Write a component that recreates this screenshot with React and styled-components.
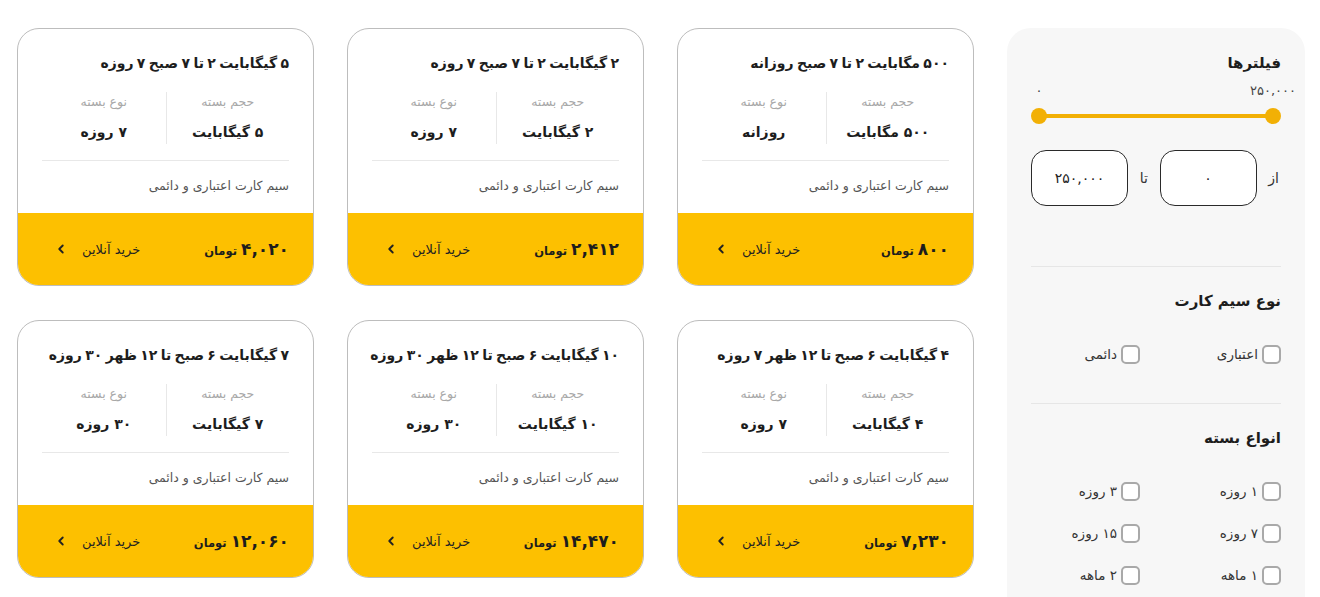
import React from "react"
import styled, { createGlobalStyle } from "styled-components"
import { ChevronLeft } from "lucide-react"

const GlobalStyle = createGlobalStyle`
  html, body {
    margin: 0;
    padding: 0;
    background: #fff;
    overflow: hidden;
  }
  body {
    font-family: "DejaVu Sans", sans-serif;
    color: #1d1d1d;
  }
  * { box-sizing: border-box; }
`

const Page = styled.div`
  direction: rtl;
  display: flex;
  align-items: flex-start;
  gap: 33px;
  padding: 28px 15px 0 18px;
`

const Sidebar = styled.aside`
  width: 298px;
  flex-shrink: 0;
  background: #f7f7f7;
  border-radius: 24px 24px 0 0;
  padding: 0 24px 40px;
`

const Section = styled.div`
  padding: ${(p) => p.$pad || "23px 0 37px"};
  border-bottom: ${(p) => (p.$last ? "none" : "1px solid #e6e6e6")};
`

const Heading = styled.h3`
  margin: 0;
  font-size: 15px;
  font-weight: 700;
  line-height: 22px;
  color: #1d1d1d;
`

const SliderLabels = styled.div`
  display: flex;
  justify-content: space-between;
  margin-top: 8px;
  height: 18px;
`

const ThumbLabel = styled.span`
  width: 16px;
  display: flex;
  justify-content: center;
  white-space: nowrap;
  font-size: 13px;
  line-height: 18px;
  color: #444;
`

const Track = styled.div`
  margin-top: 8px;
  height: 16px;
  display: flex;
  align-items: center;
  justify-content: space-between;
  background: linear-gradient(#f2b005, #f2b005) center / calc(100% - 16px) 4px no-repeat;
`

const Thumb = styled.span`
  width: 16px;
  height: 16px;
  border-radius: 50%;
  background: #f2b005;
`

const RangeRow = styled.div`
  margin-top: 26px;
  display: flex;
  align-items: center;
  justify-content: space-between;
`

const RangeLabel = styled.span`
  font-size: 14px;
  color: #333;
  padding: 0 2px;
`

const RangeInput = styled.div`
  width: 97px;
  height: 56px;
  border: 1px solid #2a2a2a;
  border-radius: 15px;
  background: #fff;
  display: flex;
  align-items: center;
  justify-content: center;
  font-size: 14px;
  color: #222;
`

const CheckGrid = styled.div`
  margin-top: 30px;
  display: grid;
  grid-template-columns: 1fr 1fr;
  column-gap: 32px;
  row-gap: 18px;
`

const CheckItem = styled.label`
  display: flex;
  align-items: center;
  gap: 4px;
  height: 24px;
  font-size: 13.5px;
  color: #333;
`

const Box = styled.span`
  width: 19px;
  height: 19px;
  border: 2px solid #a9a9a9;
  border-radius: 5px;
  background: #fff;
  flex-shrink: 0;
`

const Grid = styled.div`
  display: grid;
  grid-template-columns: repeat(3, 297px);
  gap: 34px 33px;
`

const Card = styled.div`
  height: 258px;
  border: 1px solid #bdbdbd;
  border-radius: 22px;
  overflow: hidden;
  display: flex;
  flex-direction: column;
  background: #fff;
`

const CardBody = styled.div`
  flex: 1;
  padding: 23px 24px 0;
`

const CardTitle = styled.h4`
  margin: 0;
  font-size: 14px;
  font-weight: 700;
  line-height: 22px;
  word-spacing: -1.5px;
  white-space: nowrap;
  color: #1d1d1d;
`

const Specs = styled.div`
  margin-top: 18px;
  padding-bottom: 16px;
  border-bottom: 1px solid #e8e8e8;
  display: grid;
  grid-template-columns: 1fr 1fr;
`

const Spec = styled.div`
  display: flex;
  flex-direction: column;
  align-items: center;
  height: 52px;
  border-left: ${(p) => (p.$divided ? "1px solid #e8e8e8" : "none")};
`

const SpecLabel = styled.span`
  font-size: 12.5px;
  line-height: 20px;
  color: #a8a8a8;
`

const SpecValue = styled.span`
  margin-top: 9px;
  font-size: 14px;
  font-weight: 700;
  line-height: 22px;
  color: #1d1d1d;
`

const Desc = styled.p`
  margin: 15px 0 0;
  font-size: 12.5px;
  line-height: 20px;
  color: #555;
`

const Footer = styled.div`
  height: 72px;
  background: #fdc000;
  display: flex;
  align-items: center;
  justify-content: space-between;
  padding: 0 24px 0 36px;
`

const Price = styled.div`
  display: flex;
  align-items: baseline;
  gap: 4px;
`

const Amount = styled.span`
  font-size: 17px;
  font-weight: 700;
  color: #1d1d1d;
`

const Currency = styled.span`
  font-size: 11.5px;
  font-weight: 700;
  color: #1d1d1d;
`

const BuyButton = styled.button`
  border: none;
  background: none;
  padding: 0;
  display: flex;
  align-items: center;
  gap: 14px;
  font-family: inherit;
  font-size: 13px;
  color: #222;
  cursor: pointer;
`

const packages = [
  { title: "۵۰۰ مگابایت ۲ تا ۷ صبح روزانه", size: "۵۰۰ مگابایت", type: "روزانه", price: "۸۰۰" },
  { title: "۲ گیگابایت ۲ تا ۷ صبح ۷ روزه", size: "۲ گیگابایت", type: "۷ روزه", price: "۲,۴۱۲" },
  { title: "۵ گیگابایت ۲ تا ۷ صبح ۷ روزه", size: "۵ گیگابایت", type: "۷ روزه", price: "۴,۰۲۰" },
  { title: "۴ گیگابایت ۶ صبح تا ۱۲ ظهر ۷ روزه", size: "۴ گیگابایت", type: "۷ روزه", price: "۷,۲۳۰" },
  { title: "۱۰ گیگابایت ۶ صبح تا ۱۲ ظهر ۳۰ روزه", size: "۱۰ گیگابایت", type: "۳۰ روزه", price: "۱۴,۴۷۰" },
  { title: "۷ گیگابایت ۶ صبح تا ۱۲ ظهر ۳۰ روزه", size: "۷ گیگابایت", type: "۳۰ روزه", price: "۱۲,۰۶۰" },
]

const simTypes = ["اعتباری", "دائمی"]
const durations = ["۱ روزه", "۳ روزه", "۷ روزه", "۱۵ روزه", "۱ ماهه", "۲ ماهه"]

const PackageCard = ({ item }) => (
  <Card>
    <CardBody>
      <CardTitle>{item.title}</CardTitle>
      <Specs>
        <Spec $divided>
          <SpecLabel>حجم بسته</SpecLabel>
          <SpecValue>{item.size}</SpecValue>
        </Spec>
        <Spec>
          <SpecLabel>نوع بسته</SpecLabel>
          <SpecValue>{item.type}</SpecValue>
        </Spec>
      </Specs>
      <Desc>سیم کارت اعتباری و دائمی</Desc>
    </CardBody>
    <Footer>
      <Price>
        <Amount>{item.price}</Amount>
        <Currency>تومان</Currency>
      </Price>
      <BuyButton>
        خرید آنلاین
        <ChevronLeft size={14} strokeWidth={3.2} />
      </BuyButton>
    </Footer>
  </Card>
)

export default function App() {
  return (
    <>
      <GlobalStyle />
      <Page>
        <Sidebar>
          <Section $pad="24px 0 60px">
            <Heading>فیلترها</Heading>
            <SliderLabels>
              <ThumbLabel>۲۵۰,۰۰۰</ThumbLabel>
              <ThumbLabel>۰</ThumbLabel>
            </SliderLabels>
            <Track>
              <Thumb />
              <Thumb />
            </Track>
            <RangeRow>
              <RangeLabel>از</RangeLabel>
              <RangeInput>۰</RangeInput>
              <RangeLabel>تا</RangeLabel>
              <RangeInput>۲۵۰,۰۰۰</RangeInput>
            </RangeRow>
          </Section>
          <Section>
            <Heading>نوع سیم کارت</Heading>
            <CheckGrid>
              {simTypes.map((t) => (
                <CheckItem key={t}>
                  <Box />
                  {t}
                </CheckItem>
              ))}
            </CheckGrid>
          </Section>
          <Section $last>
            <Heading>انواع بسته</Heading>
            <CheckGrid>
              {durations.map((d) => (
                <CheckItem key={d}>
                  <Box />
                  {d}
                </CheckItem>
              ))}
            </CheckGrid>
          </Section>
        </Sidebar>
        <Grid>
          {packages.map((p) => (
            <PackageCard key={p.title} item={p} />
          ))}
        </Grid>
      </Page>
    </>
  )
}
